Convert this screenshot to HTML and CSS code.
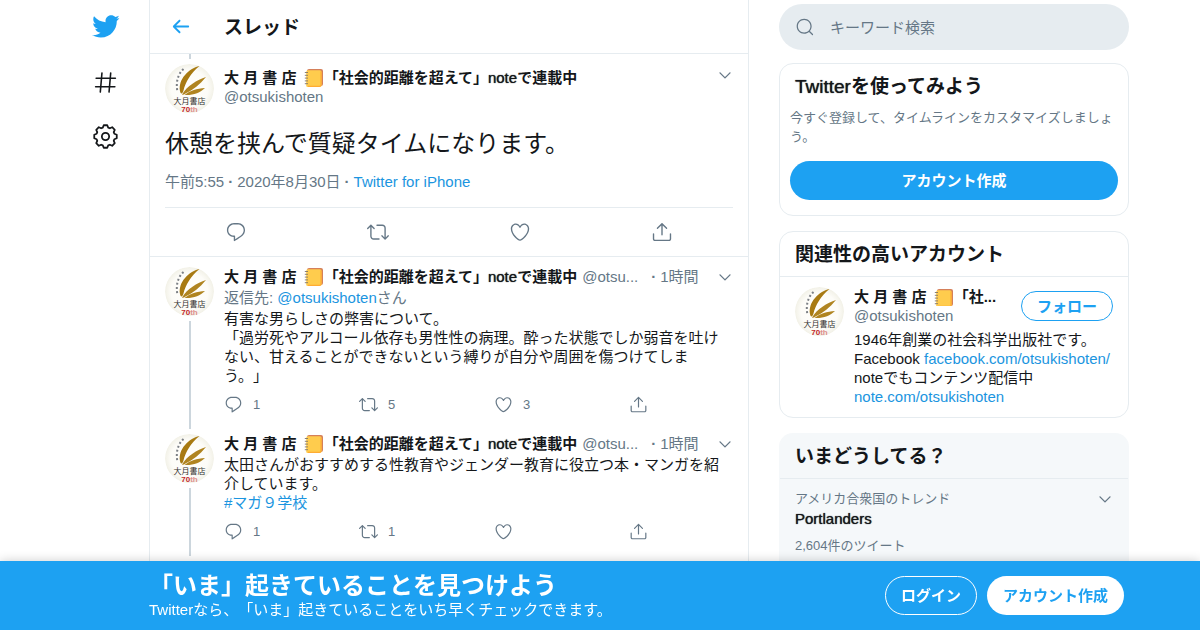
FILE: index.html
```html
<!DOCTYPE html>
<html lang="ja">
<head>
<meta charset="utf-8">
<meta name="viewport" content="width=device-width, initial-scale=1">
<title>スレッド / Twitter</title>
<link rel="stylesheet" href="styles.css">
</head>
<body>
<svg class="sprite" aria-hidden="true">
  <symbol id="bird" viewBox="0 0 24 24"><path d="M23.643 4.937c-.835.37-1.732.62-2.675.733.962-.576 1.7-1.49 2.048-2.578-.9.534-1.897.922-2.958 1.13-.85-.904-2.06-1.47-3.4-1.47-2.572 0-4.658 2.086-4.658 4.66 0 .364.042.718.12 1.06-3.873-.195-7.304-2.05-9.602-4.868-.4.69-.63 1.49-.63 2.342 0 1.616.823 3.043 2.072 3.878-.764-.025-1.482-.234-2.11-.583v.06c0 2.257 1.605 4.14 3.737 4.568-.392.106-.803.162-1.227.162-.3 0-.593-.028-.877-.082.593 1.85 2.313 3.198 4.352 3.234-1.595 1.25-3.604 1.995-5.786 1.995-.376 0-.747-.022-1.112-.065 2.062 1.323 4.51 2.093 7.14 2.093 8.57 0 13.255-7.098 13.255-13.254 0-.2-.005-.402-.014-.602.91-.658 1.7-1.477 2.323-2.41z"/></symbol>
  <symbol id="hash" viewBox="0 0 24 24"><path d="M8.6 2.8 7 21.2M17 2.8l-1.600 18.400M3 8h18.500M2.500 16H21" fill="none" stroke="currentColor" stroke-width="1.500" stroke-linecap="round"/></symbol>
  <symbol id="gear" viewBox="-12 -12 24 24"><path d="M-1.700-10.800H1.700L2.600-8.500 4.200-7.900 6.400-8.900 8.900-6.400 7.900-4.200 8.500-2.600 10.800-1.700V1.700L8.500 2.600 7.900 4.200 8.900 6.400 6.400 8.900 4.200 7.900 2.600 8.500 1.700 10.800H-1.700L-2.600 8.500-4.200 7.900-6.400 8.900-8.900 6.400-7.900 4.200-8.500 2.600-10.800 1.700V-1.700L-8.500-2.600-7.900-4.200-8.900-6.400-6.400-8.900-4.200-7.900-2.600-8.500Z" fill="none" stroke="currentColor" stroke-width="1.700" stroke-linejoin="round"/><circle r="3.500" fill="none" stroke="currentColor" stroke-width="1.700"/></symbol>
  <symbol id="back" viewBox="0 0 24 24"><path d="M20 11H7.414l4.293-4.293c.39-.39.39-1.023 0-1.414s-1.023-.39-1.414 0l-6 6c-.39.39-.39 1.023 0 1.414l6 6c.195.195.45.293.707.293s.512-.098.707-.293c.39-.39.39-1.023 0-1.414L7.414 13H20c.553 0 1-.447 1-1s-.447-1-1-1z"/></symbol>
  <symbol id="reply" viewBox="0 0 24 24"><path d="M14.046 2.242l-4.148-.01h-.002c-4.374 0-7.8 3.427-7.8 7.802 0 4.098 3.186 7.206 7.465 7.37v3.828c0 .108.044.286.12.403.142.225.384.347.632.347.138 0 .277-.038.402-.118.264-.168 6.473-4.14 8.088-5.506 1.902-1.61 3.04-3.97 3.043-6.312v-.017c-.006-4.367-3.43-7.787-7.8-7.788zm3.787 12.972c-1.134.96-4.862 3.405-6.772 4.643V16.67c0-.414-.335-.75-.75-.75h-.396c-3.66 0-6.318-2.476-6.318-5.886 0-3.534 2.768-6.302 6.3-6.302l4.147.01h.002c3.532 0 6.3 2.766 6.302 6.296-.003 1.91-.942 3.844-2.514 5.176z"/></symbol>
  <symbol id="retweet" viewBox="0 0 24 24"><path d="M23.77 15.67c-.292-.293-.767-.293-1.06 0l-2.22 2.22V7.65c0-2.068-1.683-3.75-3.75-3.75h-5.85c-.414 0-.75.336-.75.75s.336.75.75.75h5.85c1.24 0 2.25 1.01 2.25 2.25v10.24l-2.22-2.22c-.293-.293-.768-.293-1.06 0s-.294.768 0 1.06l3.5 3.5c.145.147.337.22.53.22s.383-.072.53-.22l3.5-3.5c.294-.292.294-.767 0-1.06zm-10.66 3.28H7.26c-1.24 0-2.25-1.01-2.25-2.25V6.46l2.22 2.22c.148.147.34.22.532.22s.384-.073.53-.22c.293-.293.293-.768 0-1.06l-3.5-3.5c-.293-.294-.768-.294-1.06 0l-3.5 3.5c-.294.292-.294.767 0 1.06s.767.293 1.06 0l2.22-2.22V16.7c0 2.068 1.683 3.75 3.75 3.75h5.85c.414 0 .75-.336.75-.75s-.337-.75-.75-.75z"/></symbol>
  <symbol id="heart" viewBox="0 0 24 24"><path d="M12 21.638h-.014C9.403 21.59 1.95 14.856 1.95 8.478c0-3.064 2.525-5.754 5.403-5.754 2.29 0 3.83 1.58 4.646 2.73.814-1.148 2.354-2.73 4.645-2.73 2.88 0 5.404 2.69 5.404 5.755 0 6.376-7.454 13.11-10.037 13.157H12zM7.354 4.225c-2.08 0-3.903 1.988-3.903 4.255 0 5.74 7.034 11.596 8.55 11.658 1.518-.062 8.55-5.917 8.55-11.658 0-2.267-1.823-4.255-3.903-4.255-2.528 0-3.94 2.936-3.952 2.965-.23.562-1.156.562-1.387 0-.014-.03-1.425-2.965-3.954-2.965z"/></symbol>
  <symbol id="share" viewBox="0 0 24 24"><path d="M17.53 7.47l-5-5c-.293-.293-.768-.293-1.06 0l-5 5c-.294.293-.294.768 0 1.06s.767.294 1.06 0l3.72-3.72V15c0 .414.336.75.75.75s.75-.336.75-.75V4.81l3.72 3.72c.146.147.338.22.53.22s.384-.072.53-.22c.293-.293.293-.767 0-1.06z"/><path d="M19.708 21.944H4.292C3.028 21.944 2 20.916 2 19.652V14c0-.414.336-.75.75-.75s.75.336.75.75v5.652c0 .437.355.792.792.792h15.416c.437 0 .792-.355.792-.792V14c0-.414.336-.75.75-.75s.75.336.75.75v5.652c0 1.264-1.028 2.292-2.292 2.292z"/></symbol>
  <symbol id="caret" viewBox="0 0 24 24"><path d="M20.207 8.147c-.39-.39-1.023-.39-1.414 0L12 14.94 5.207 8.147c-.39-.39-1.023-.39-1.414 0-.39.39-.39 1.023 0 1.414l7.5 7.5c.195.196.45.294.707.294s.512-.098.707-.293l7.5-7.5c.39-.39.39-1.022 0-1.413z"/></symbol>
  <symbol id="search" viewBox="0 0 24 24"><path d="M21.53 20.47l-3.66-3.66C19.195 15.24 20 13.214 20 11c0-4.97-4.03-9-9-9s-9 4.03-9 9 4.03 9 9 9c2.215 0 4.24-.804 5.808-2.13l3.66 3.66c.147.146.34.22.53.22s.385-.073.53-.22c.295-.293.295-.767.002-1.06zM3.5 11c0-4.135 3.365-7.5 7.5-7.5s7.5 3.365 7.5 7.5-3.365 7.5-7.5 7.5-7.5-3.365-7.5-7.5z"/></symbol>
  <symbol id="notebook" viewBox="0 0 20 20">
    <rect x="3" y="1" width="16" height="17" rx="2" fill="#d5805a"/>
    <path d="M4 2.200H15.800Q17.600 2.200 17.600 4V17Q17.600 19 15.600 19H3.700Q2.200 19 2.200 17.500V4Q2.200 2.200 4 2.200Z" fill="#ffcc4d"/>
    <path d="M17 3.500V16.800Q17 18.400 15.300 18.400H4" fill="none" stroke="#ffac33" stroke-width="1.200"/>
    <path d="M1.200 4.500H3.600M1.200 7.300H3.600M1.200 10.100H3.600M1.200 12.900H3.600M1.200 15.700H3.600" stroke="#7f7468" stroke-width=".9" stroke-linecap="round"/>
  </symbol>
  <symbol id="crest" viewBox="0 0 49 49">
    <radialGradient id="paper"><stop offset="0" stop-color="#fffefb"/><stop offset=".75" stop-color="#fdfcf8"/><stop offset="1" stop-color="#f2f1e7"/></radialGradient>
    <circle cx="24.500" cy="24.500" r="24.500" fill="url(#paper)"/>
    <path d="M34.500 2C23.500 4.500 13 15.500 15 27 15.500 30.500 17.500 30 18.500 26.500 20.500 18 25.500 9.500 34.500 2Z" fill="#a87a12"/>
    <path d="M41 13C32 16 22 22 17 30.500 18.500 31 19.500 30.500 20.500 29.500 28 26 35 20.500 41 13Z" fill="#b08420"/>
    <path d="M40 24C32 24.500 25 26.500 19.500 31 28 31.500 35 29 40 24Z" fill="#b08420"/>
    <path d="M18.500 5C13 10 10.500 18 12.500 28" fill="none" stroke="#7b7f85" stroke-width="2" stroke-dasharray="2 2.200"/>
    <text x="24.500" y="40" class="crest-name">大月書店</text>
    <text x="24.500" y="48" class="crest-year">70<tspan class="crest-th">th</tspan></text>
  </symbol>
</svg>

<div class="layout">
  <nav class="rail" aria-label="メイン">
    <a href="#" class="rail-logo" aria-label="Twitter"><svg><use href="#bird"/></svg></a>
    <a href="#" aria-label="話題を検索"><svg><use href="#hash"/></svg></a>
    <a href="#" aria-label="設定"><svg><use href="#gear"/></svg></a>
  </nav>

  <main class="thread">
    <header class="thread-head">
      <button class="icon-button back" aria-label="戻る"><svg><use href="#back"/></svg></button>
      <h1>スレッド</h1>
    </header>

    <article class="focus">
      <div class="author">
        <svg class="avatar"><use href="#crest"/></svg>
        <div class="author-text">
          <a class="name" href="#">大 月 書 店 <svg class="emoji"><use href="#notebook"/></svg>「社会的距離を超えて」<span class="latin">note</span>で連載中</a>
          <div class="muted">@otsukishoten</div>
        </div>
        <button class="icon-button more" aria-label="もっと見る"><svg><use href="#caret"/></svg></button>
      </div>
      <p class="statement">休憩を挟んで質疑タイムになります。</p>
      <div class="stamp">午前5:55<span class="dot">·</span>2020年8月30日<span class="dot">·</span><a href="#">Twitter for iPhone</a></div>
      <div class="focus-actions">
        <button class="icon-button" aria-label="返信"><svg><use href="#reply"/></svg></button>
        <button class="icon-button" aria-label="リツイート"><svg><use href="#retweet"/></svg></button>
        <button class="icon-button" aria-label="いいね"><svg><use href="#heart"/></svg></button>
        <button class="icon-button" aria-label="共有"><svg><use href="#share"/></svg></button>
      </div>
    </article>

    <article class="tweet">
      <div class="track"><svg class="avatar"><use href="#crest"/></svg></div>
      <div class="tweet-main">
        <div class="byline">
          <a class="name" href="#">大 月 書 店 <svg class="emoji"><use href="#notebook"/></svg>「社会的距離を超えて」<span class="latin">note</span>で連載中</a>
          <span class="handle">@otsu...</span><span class="dot">·</span><span class="age">1時間</span>
          <button class="icon-button more" aria-label="もっと見る"><svg><use href="#caret"/></svg></button>
        </div>
        <div class="reply-to">返信先: <a href="#">@otsukishoten</a>さん</div>
        <p class="tweet-text">有害な男らしさの弊害について。<br>「過労死やアルコール依存も男性性の病理。酔った状態でしか弱音を吐けない、甘えることができないという縛りが自分や周囲を傷つけてしまう。」</p>
        <div class="actions">
          <button aria-label="返信 1"><svg><use href="#reply"/></svg>1</button>
          <button aria-label="リツイート 5"><svg><use href="#retweet"/></svg>5</button>
          <button aria-label="いいね 3"><svg><use href="#heart"/></svg>3</button>
          <button aria-label="共有"><svg><use href="#share"/></svg></button>
        </div>
      </div>
    </article>

    <article class="tweet">
      <div class="track"><svg class="avatar"><use href="#crest"/></svg></div>
      <div class="tweet-main">
        <div class="byline">
          <a class="name" href="#">大 月 書 店 <svg class="emoji"><use href="#notebook"/></svg>「社会的距離を超えて」<span class="latin">note</span>で連載中</a>
          <span class="handle">@otsu...</span><span class="dot">·</span><span class="age">1時間</span>
          <button class="icon-button more" aria-label="もっと見る"><svg><use href="#caret"/></svg></button>
        </div>
        <p class="tweet-text">太田さんがおすすめする性教育やジェンダー教育に役立つ本・マンガを紹介しています。<br><a href="#">#マガ９学校</a></p>
        <div class="actions">
          <button aria-label="返信 1"><svg><use href="#reply"/></svg>1</button>
          <button aria-label="リツイート 1"><svg><use href="#retweet"/></svg>1</button>
          <button aria-label="いいね"><svg><use href="#heart"/></svg></button>
          <button aria-label="共有"><svg><use href="#share"/></svg></button>
        </div>
      </div>
    </article>
  </main>

  <aside class="side">
    <label class="search">
      <svg><use href="#search"/></svg>
      <input type="search" placeholder="キーワード検索" aria-label="キーワード検索">
    </label>

    <section class="card signup">
      <h2><span class="latin">Twitter</span>を使ってみよう</h2>
      <p>今すぐ登録して、タイムラインをカスタマイズしましょう。</p>
      <button class="pill solid">アカウント作成</button>
    </section>

    <section class="card">
      <h2 class="ruled">関連性の高いアカウント</h2>
      <div class="account">
        <svg class="avatar"><use href="#crest"/></svg>
        <div class="account-main">
          <div class="account-top">
            <div class="account-id">
              <a class="name" href="#">大 月 書 店 <svg class="emoji"><use href="#notebook"/></svg>「社...</a>
              <div class="muted">@otsukishoten</div>
            </div>
            <button class="pill outline">フォロー</button>
          </div>
          <p>1946年創業の社会科学出版社です。<br>Facebook <a href="#">facebook.com/otsukishoten/</a><br>noteでもコンテンツ配信中<br><a href="#">note.com/otsukishoten</a></p>
        </div>
      </div>
    </section>

    <section class="card trends">
      <h2 class="ruled">いまどうしてる？</h2>
      <div class="trend">
        <div class="trend-top"><span>アメリカ合衆国のトレンド</span><button class="icon-button more" aria-label="もっと見る"><svg><use href="#caret"/></svg></button></div>
        <a class="trend-name latin" href="#">Portlanders</a>
        <div class="trend-count">2,604件のツイート</div>
      </div>
    </section>
  </aside>
</div>

<footer class="banner">
  <div class="banner-inner">
    <div class="banner-text">
      <h2>「いま」起きていることを見つけよう</h2>
      <p>Twitterなら、「いま」起きていることをいち早くチェックできます。</p>
    </div>
    <button class="pill ghost">ログイン</button>
    <button class="pill white">アカウント作成</button>
  </div>
</footer>
</body>
</html>
```
FILE: styles.css
```css
* { box-sizing: border-box; }
html, body { height: 100%; }
body {
  margin: 0;
  padding-right: 10px;
  overflow: hidden;
  background: #fff;
  color: #14171a;
  font: 15px/19px "Liberation Sans", "Noto Sans CJK JP", sans-serif;
  text-spacing-trim: space-all;
}
h1, h2, p { margin: 0; }
h1, h2 { font-size: 19px; line-height: 24px; font-weight: 700; }
a { color: #1b95e0; text-decoration: none; }
button { font: inherit; color: inherit; background: none; border: 0; padding: 0; cursor: pointer; }
svg { display: block; fill: currentColor; flex: none; }
.sprite { position: absolute; width: 0; height: 0; visibility: hidden; }
.muted { color: #657786; }

/* Latin words inside bold headings keep the regular letter widths */
.latin { font-weight: 400; text-shadow: 0 0 1px currentColor; }

.layout {
  display: grid;
  grid-template-columns: 88px minmax(0, 600px) minmax(0, 380px);
  justify-content: center;
  height: 100%;
}

/* left rail */
.rail { display: flex; flex-direction: column; align-items: center; gap: 29px; padding-top: 12px; }
.rail a { color: #14171a; }
.rail svg { width: 25px; height: 25px; }
.rail .rail-logo { color: #1da1f2; }
.rail .rail-logo svg { width: 29px; height: 29px; }

/* thread */
.thread { border: solid #e6ecf0; border-width: 0 1px; min-height: 100%; }
.thread-head { display: flex; align-items: center; height: 54px; padding: 0 15px; border-bottom: 1px solid #e6ecf0; }
.thread-head h1 { padding: 2px 0 0 28px; }
.back { color: #1da1f2; padding-left: 4px; }
.back svg { width: 23px; height: 23px; margin: 0 4px 0 0; }

.avatar { width: 49px; height: 49px; border-radius: 50%; }
.crest-name { font-size: 8px; font-weight: 400; fill: #33312e; text-anchor: middle; }
.crest-year { font: 700 8px "Liberation Sans", sans-serif; fill: #c3272b; text-anchor: middle; }
.crest-th { fill: #dd8f8c; }

.name { color: #14171a; font-weight: 700; white-space: nowrap; }
.emoji { display: inline-block; width: 20px; height: 20px; margin: -3px 0 0 3px; vertical-align: middle; }
.dot { padding: 0 4px; color: #657786; font-weight: 700; }
.more { color: #657786; }
.more svg { width: 16px; height: 16px; }

.focus { padding: 0 15px; border-bottom: 1px solid #e6ecf0; }
.focus::before { content: ""; display: block; width: 2px; height: 5px; margin: 0 0 5px 24px; background: #ccd6dd; }
.author { display: flex; gap: 10px; align-items: flex-start; }
.author-text { flex: 1; min-width: 0; padding-top: 4px; }
.author .name { display: block; height: 19px; }
.author .more { padding-top: 3px; }
.statement { padding-top: 16px; font-size: 24px; line-height: 30px; }
.stamp { padding: 13px 0 16px; color: #657786; }
.focus-actions { display: grid; grid-template-columns: repeat(4, 1fr); justify-items: center; padding: 13px 0; border-top: 1px solid #e6ecf0; color: #657786; }
.focus-actions svg { width: 22px; height: 22px; }

.tweet { display: flex; gap: 10px; padding: 10px 15px; }
.track { display: flex; flex-direction: column; align-items: center; }
.track::after { content: ""; flex: 1; width: 2px; margin: 5px 0 -15px; background: #ccd6dd; }
.tweet-main { flex: 1; min-width: 0; }
.byline { display: flex; height: 21px; color: #657786; }
.handle { flex: 0 1 70px; min-width: 0; padding-left: 5px; overflow: hidden; text-overflow: ellipsis; white-space: nowrap; }
.age { white-space: nowrap; }
.byline .more { margin-left: auto; height: 20px; }
.reply-to { color: #657786; height: 21px; }
.tweet-text { padding-right: 10px; line-break: strict; }
.actions { display: grid; grid-template-columns: repeat(3, 135px) auto; justify-content: start; padding-top: 10px; color: #657786; font-size: 13px; }
.actions button { display: flex; align-items: center; gap: 10px; height: 19px; }
.actions svg { width: 19px; height: 19px; }

/* right column */
.side { padding: 4px 0 0 30px; }
.search { display: flex; align-items: center; height: 46px; padding: 0 16px; gap: 15px; border-radius: 23px; background: #e6ecf0; color: #657786; }
.search svg { width: 20px; height: 20px; }
.search input { flex: 1; min-width: 0; border: 0; padding: 0; background: none; font: inherit; outline: 0; }
.search input::placeholder { color: #657786; opacity: 1; }
.card { margin-top: 15px; border: 1px solid #e6ecf0; border-radius: 14px; }
.search + .card { margin-top: 13px; }
.signup { padding: 11px 10px 15px; }
.signup h2 { padding-left: 5px; }
.signup p { padding: 9px 0 15px; color: #657786; font-size: 13px; }
.ruled { padding: 11px 15px 9px; border-bottom: 1px solid #e6ecf0; }
.account { display: flex; gap: 10px; padding: 10px 15px 11px; }
.account-main { flex: 1; min-width: 0; }
.account-top { display: flex; align-items: center; gap: 10px; padding-bottom: 5px; }
.account-id { flex: 1; min-width: 0; }
.account-id .name { display: block; height: 19px; overflow: hidden; text-overflow: ellipsis; }
.account-id .emoji { margin-bottom: -2px; }
.trends { background: #f5f8fa; border-bottom: 0; border-color: #f5f8fa; border-radius: 14px 14px 0 0; }
.trend { padding: 10px 15px; color: #657786; font-size: 13px; }
.trend-top { display: flex; justify-content: space-between; padding-bottom: 1px; }
.trend-name { display: block; color: #14171a; font-size: 15px; }
.trend-count { padding-top: 8px; }

/* buttons */
.pill { height: 39px; padding: 0 16px; border-radius: 20px; font-weight: 700; white-space: nowrap; }
.solid { width: 100%; background: #1da1f2; color: #fff; }
.outline { height: 30px; padding: 0 15px; border: 1px solid #1da1f2; color: #1da1f2; }
.ghost { padding: 0 15px; border: 1px solid #fff; color: #fff; }
.white { background: #fff; color: #1da1f2; }

/* bottom banner */
.banner { position: fixed; inset: auto 0 0; padding-right: 10px; background: #1da1f2; color: #fff; box-shadow: 0 0 10px rgba(0, 0, 0, .2); }
.banner-inner { display: flex; align-items: center; gap: 10px; max-width: 1068px; margin: 0 auto; padding: 9px 5px 10px 88px; }
.banner-text { flex: 1; }
.banner h2 { padding-top: 2px; font-size: 24px; line-height: 28px; }
.banner p { line-height: 20px; }
```
